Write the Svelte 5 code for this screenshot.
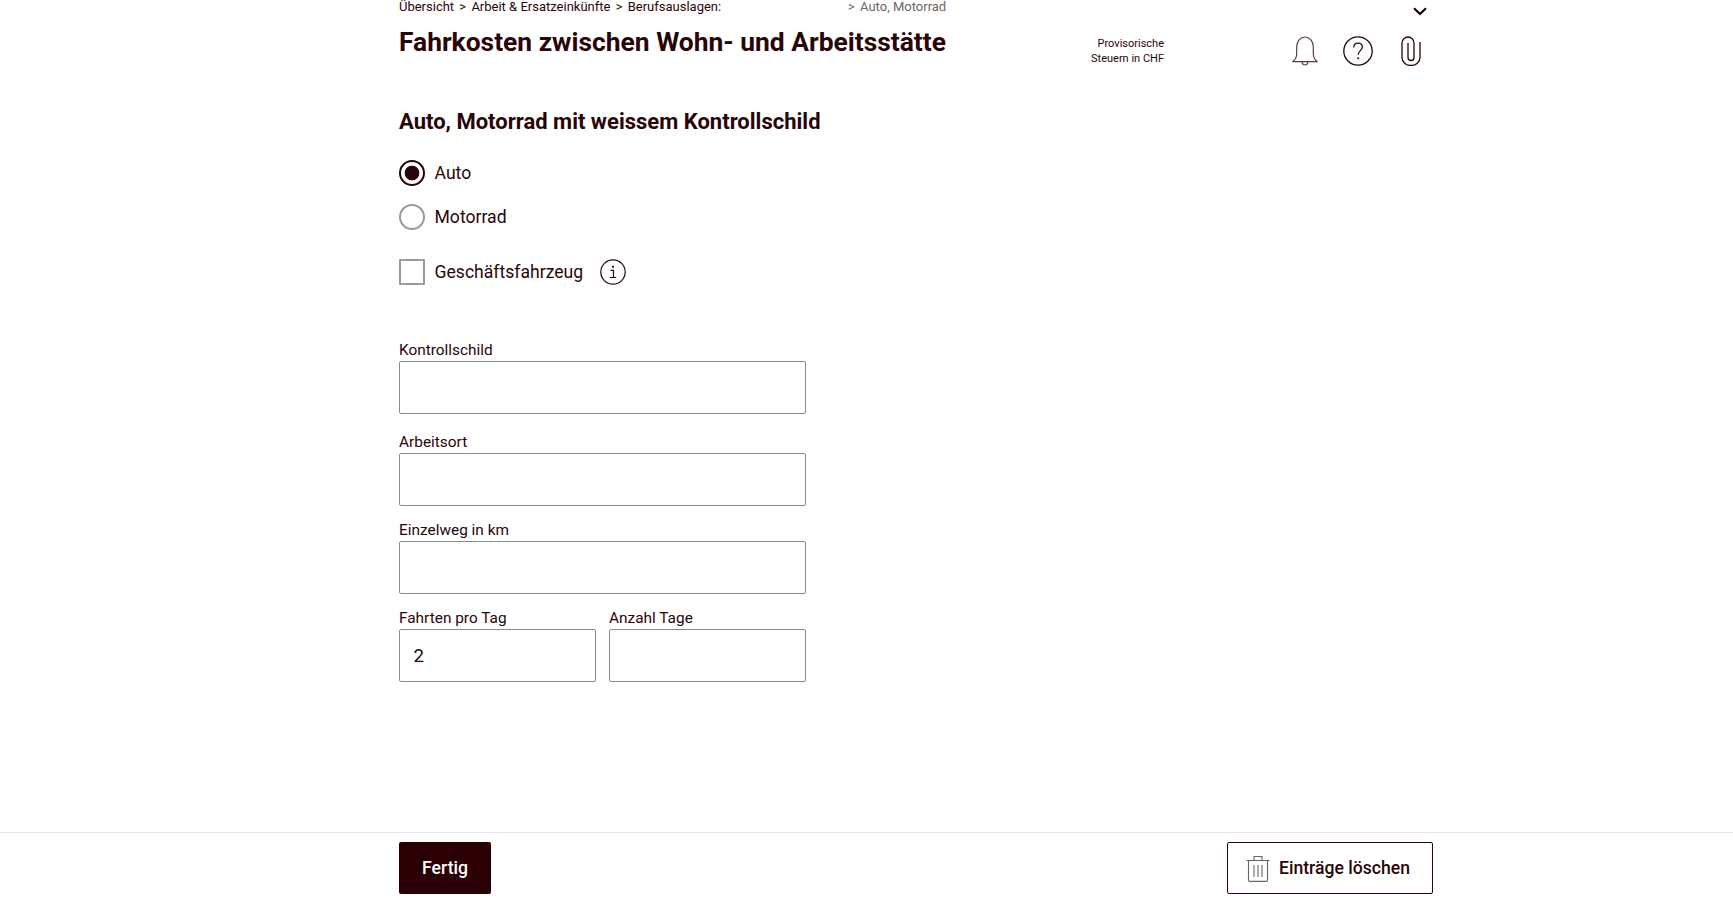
<script lang="ts">
  let vehicle = $state('auto');
  let business = $state(false);
  let plate = $state('');
  let workplace = $state('');
  let distance = $state('');
  let tripsPerDay = $state('2');
  let days = $state('');
</script>

<div class="page">
  <header class="wrap top">
    <div class="head-left">
      <nav class="crumbs">
        <span class="crumb-path">Übersicht <span class="sep">&gt;</span> Arbeit &amp; Ersatzeinkünfte <span class="sep">&gt;</span> Berufsauslagen:</span>
        <span class="crumb-current"><span class="sep-first">&gt;</span> Auto, Motorrad</span>
      </nav>
      <h1>Fahrkosten zwischen Wohn- und Arbeitsstätte</h1>
    </div>
    <div class="tax-note">Provisorische<br />Steuern in CHF</div>
    <div class="head-icons">
      <svg class="chevron" width="14" height="9" viewBox="0 0 14 9" fill="none" stroke="#1c0205" stroke-width="2.2">
        <path d="M1 1.2 7 7l6-5.8" />
      </svg>
      <div class="tools">
        <svg width="26" height="30" viewBox="0 0 26 30" fill="none" stroke="#5a3f42" stroke-width="1.2">
          <path d="M.8 25.600c2.700-1.800 3.900-4 3.900-8.600v-6C4.700 5.300 8.300 1 13 1s8.300 4.300 8.300 10v6c0 4.600 1.200 6.800 3.900 8.600z" stroke-linejoin="round" />
          <path d="M10 26c.3 2 1.400 3 3 3s2.700-1 3-3" />
        </svg>
        <svg width="30" height="30" viewBox="0 0 30 30" fill="none" stroke="#2a0508" stroke-width="1.3">
          <circle cx="15" cy="15" r="14.200" />
          <path d="M10.800 11.500c0-2.700 1.900-4.300 4.300-4.300s4.200 1.600 4.200 3.900c0 3.600-4.100 3.500-4.100 7.600" />
          <circle cx="15.200" cy="22.300" r="1" fill="#2a0508" stroke="none" />
        </svg>
        <svg class="clip" width="20" height="30" viewBox="0 0 20 30" fill="none" stroke="#2a0508" stroke-width="1.3">
          <path d="M7 7v14.500a3 3 0 0 0 6 0V7A6 6 0 0 0 1 7v14.500a9 8 0 0 0 18 0V6" />
        </svg>
      </div>
    </div>
  </header>

  <main class="wrap form">
    <h2>Auto, Motorrad mit weissem Kontrollschild</h2>

    <label class="choice radio-row">
      <input type="radio" name="vehicle" value="auto" bind:group={vehicle} />
      <span>Auto</span>
    </label>
    <label class="choice radio-row">
      <input type="radio" name="vehicle" value="motorrad" bind:group={vehicle} />
      <span>Motorrad</span>
    </label>
    <div class="check-row">
      <label class="choice">
        <input type="checkbox" bind:checked={business} />
        <span>Geschäftsfahrzeug</span>
      </label>
      <svg class="info" width="26" height="26" viewBox="0 0 26 26" fill="none" stroke="#2a0508" stroke-width="1.2">
        <circle cx="13" cy="13" r="12.200" />
        <path d="M10.500 11.300h3v7M10 18.500h6.200" />
        <circle cx="13" cy="7.800" r="1.100" fill="#2a0508" stroke="none" />
      </svg>
    </div>

    <div class="fields">
      <label class="field first">
        <span>Kontrollschild</span>
        <input type="text" bind:value={plate} />
      </label>
      <label class="field">
        <span>Arbeitsort</span>
        <input type="text" bind:value={workplace} />
      </label>
      <label class="field">
        <span>Einzelweg in km</span>
        <input type="text" bind:value={distance} />
      </label>
      <div class="pair">
        <label class="field">
          <span>Fahrten pro Tag</span>
          <input type="text" bind:value={tripsPerDay} />
        </label>
        <label class="field">
          <span>Anzahl Tage</span>
          <input type="text" bind:value={days} />
        </label>
      </div>
    </div>
  </main>

  <footer>
    <div class="wrap actions">
      <button class="primary">Fertig</button>
      <button class="secondary">
        <svg width="24" height="27" viewBox="0 0 24 27" fill="none" stroke="#6b6264" stroke-width="1.1">
          <path d="M.5 5.500h23M8 5.200V1.500h8v3.700M2.500 5.500v19.700c0 .7.500 1.200 1.200 1.200h16.600c.7 0 1.200-.5 1.200-1.200V5.500M8 10v12M12 10v12M16 10v12" />
        </svg>
        Einträge löschen
      </button>
    </div>
  </footer>
</div>

<style>
  :global(body) {
    margin: 0;
    background: #fff;
    color: #2a0508;
    font-family: Roboto, "Liberation Sans", sans-serif;
  }
  .page {
    min-height: 900px;
    display: flex;
    flex-direction: column;
    overflow: hidden;
  }
  .wrap {
    width: 1034px;
    margin-left: 399px;
  }
  .top {
    display: flex;
    height: 92px;
  }
  .head-left {
    width: 680px;
  }
  .crumbs {
    display: flex;
    font-size: 13px;
    line-height: 14px;
  }
  .crumb-path {
    width: 449px;
  }
  .sep {
    margin: 0 2px;
  }
  .sep-first {
    margin-right: 2px;
  }
  .crumb-current {
    color: #6f6466;
  }
  h1 {
    margin: 13px 0 0;
    font-size: 26.400px;
    line-height: 30px;
    font-weight: 700;
  }
  .tax-note {
    width: 85px;
    margin-top: 37px;
    font-size: 11px;
    line-height: 14.500px;
    text-align: right;
  }
  .head-icons {
    flex: 1;
    position: relative;
  }
  .chevron {
    position: absolute;
    right: 6px;
    top: 7px;
  }
  .tools {
    display: flex;
    justify-content: flex-end;
    align-items: center;
    gap: 25px;
    margin-top: 36px;
    padding-right: 12px;
  }
  .clip {
    margin-left: 3px;
  }
  h2 {
    margin: 16px 0 0;
    font-size: 22px;
    line-height: 27px;
    font-weight: 700;
  }
  .form {
    flex: 1;
  }
  .choice {
    display: flex;
    align-items: center;
    gap: 9.500px;
    font-size: 17.600px;
    line-height: 26px;
  }
  .radio-row {
    height: 26px;
    margin-top: 18px;
  }
  .radio-row:first-of-type {
    margin-top: 25px;
  }
  input[type='radio'],
  input[type='checkbox'] {
    appearance: none;
    margin: 0;
    width: 26px;
    height: 26px;
    box-sizing: border-box;
    background: #fff;
    border: 2px solid #999;
  }
  input[type='checkbox'] {
    border-radius: 1px;
  }
  input[type='radio'] {
    border-radius: 50%;
  }
  input[type='radio']:checked {
    border: 2.500px solid #2a0508;
    background: radial-gradient(circle, #2a0508 0 7px, #fff 7.700px);
  }
  .check-row {
    display: flex;
    align-items: center;
    gap: 17px;
    margin-top: 29px;
  }
  .fields {
    margin-top: 56px;
    width: 407px;
    display: flex;
    flex-direction: column;
    gap: 15px;
  }
  .field {
    display: flex;
    flex-direction: column;
    gap: 2px;
    flex: 1;
    min-width: 0;
    font-size: 15.400px;
    line-height: 18px;
  }
  .first {
    margin-bottom: 4px;
  }
  .field input {
    height: 53px;
    width: 100%;
    box-sizing: border-box;
    border: 1px solid #8a8a8a;
    border-radius: 2px;
    padding: 0 13.500px;
    font: 18.700px Roboto, "Liberation Sans", sans-serif;
    color: #2a0508;
    background: #fff;
  }
  .pair {
    display: flex;
    gap: 13px;
  }
  footer {
    border-top: 1px solid #e4e4e4;
    height: 68px;
    box-sizing: border-box;
    padding-top: 9px;
  }
  .actions {
    display: flex;
    justify-content: space-between;
  }
  button {
    height: 52px;
    border-radius: 2px;
    font: 500 17.600px Roboto, "Liberation Sans", sans-serif;
    box-sizing: border-box;
  }
  .primary {
    width: 92px;
    background: #2a0005;
    color: #fff;
    border: none;
  }
  .secondary {
    width: 206px;
    display: flex;
    align-items: center;
    justify-content: center;
    gap: 9px;
    padding-right: 10px;
    background: #fff;
    color: #2a0508;
    border: 1px solid #2a0508;
  }
</style>
